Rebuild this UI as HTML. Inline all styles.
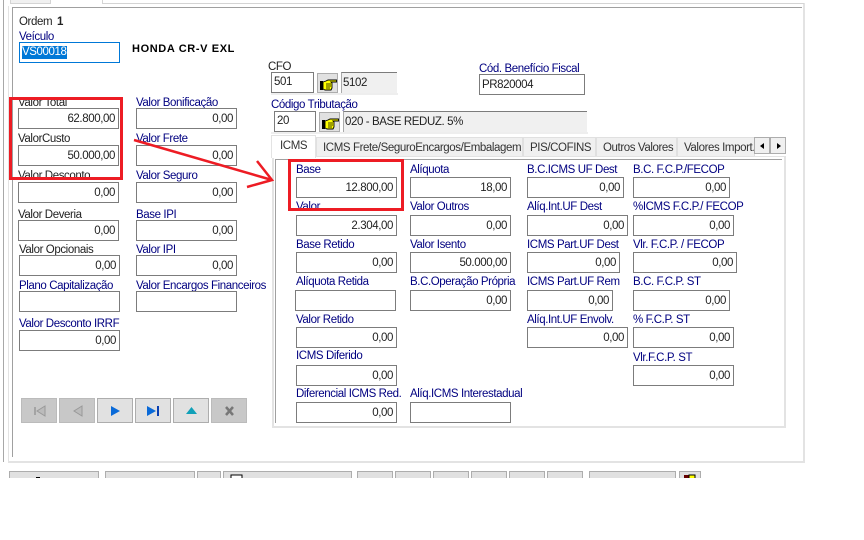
<!DOCTYPE html>
<html><head><meta charset="utf-8"><style>
html,body{margin:0;padding:0;background:#fff}
#p{position:relative;width:864px;height:540px;overflow:hidden;background:#fff;font:11.5px/13px "Liberation Sans",sans-serif;letter-spacing:-.4px;color:#000080}
#p div,#p span.a{position:absolute;box-sizing:border-box}
.l{white-space:nowrap;height:13px;margin-top:1px}
.k{color:#222}
.b{height:21px;border:1px solid #7c7c7c;background:#fff;color:#222;text-align:right;padding-right:3px;line-height:21px;white-space:nowrap}
.g{height:21px;background:#f0f0f0;border-top:1px solid #7c7c7c;border-left:1px solid #aaa;color:#222;line-height:21px;padding-left:1px;white-space:nowrap}
.h{width:21px;height:20px;background:#e1e1e1;border:1px solid #adadad}
.t{height:19px;top:137px;background:#f0f0f0;border:1px solid #e0e0e0;border-bottom:0;color:#333;line-height:20px;padding-left:6px;white-space:nowrap;overflow:hidden}
.n{top:398px;width:36px;height:25px;border:1px solid #adadad;background:#e1e1e1}
.d{background:#c8c8c8;border-color:#bbb}
.f{top:471px;height:8px;border:1px solid #adadad;background:#e1e1e1}
svg{position:absolute;left:0;top:0;overflow:visible}
</style></head><body><div id="p">

<!-- outer frame -->
<div style="left:3px;top:0;width:1px;height:462px;background:#a8a8a8"></div>
<div style="left:8px;top:6px;width:1px;height:456px;background:#e3e3e3"></div>
<div style="left:8px;top:461px;width:796px;height:2px;background:#e3e3e3"></div>
<div style="left:803px;top:3px;width:2px;height:460px;background:#e3e3e3"></div>
<div style="left:12px;top:7px;width:1px;height:450px;background:#a0a0a0"></div>
<div style="left:12px;top:7px;width:790px;height:1px;background:#a0a0a0"></div>
<div style="left:10px;top:0;width:41px;height:4px;background:#f0f0f0;border:1px solid #d4d4d4;border-top:0"></div>
<div style="left:102px;top:0;width:702px;height:4px;border-left:1px solid #d4d4d4;border-bottom:1px solid #d4d4d4"></div>

<div class="l k" style="left:19px;top:15px">Ordem</div>
<div class="l k" style="left:57px;top:15px;font-weight:bold">1</div>
<div class="l" style="left:19px;top:30px">Veículo</div>
<div class="b" style="left:19px;top:42px;width:101px;border-color:#0078d7;text-align:left;padding-left:2px;line-height:19px"><span style="background:#0078d7;color:#fff;display:inline-block;line-height:13px">VS00018</span></div>
<div class="l" style="left:132px;top:42px;color:#000;font-weight:bold;font-size:11px;letter-spacing:.62px">HONDA CR-V EXL</div>

<!-- left columns -->
<div class="l k" style="left:18px;top:96px">Valor Total</div><div class="b" style="left:18px;top:108px;width:101px">62.800,00</div>
<div class="l k" style="left:18px;top:132px">ValorCusto</div><div class="b" style="left:18px;top:145px;width:101px">50.000,00</div>
<div class="l k" style="left:18px;top:169px">Valor Desconto</div><div class="b" style="left:18px;top:182px;width:101px">0,00</div>
<div class="l k" style="left:18px;top:208px">Valor Deveria</div><div class="b" style="left:18px;top:220px;width:101px">0,00</div>
<div class="l k" style="left:19px;top:243px">Valor Opcionais</div><div class="b" style="left:19px;top:255px;width:101px">0,00</div>
<div class="l" style="left:19px;top:279px">Plano Capitalização</div><div class="b" style="left:19px;top:291px;width:101px"></div>
<div class="l" style="left:19px;top:317px">Valor Desconto IRRF</div><div class="b" style="left:19px;top:330px;width:101px">0,00</div>

<div class="l" style="left:136px;top:96px">Valor Bonificação</div><div class="b" style="left:136px;top:108px;width:101px">0,00</div>
<div class="l" style="left:136px;top:132px">Valor Frete</div><div class="b" style="left:136px;top:145px;width:101px">0,00</div>
<div class="l" style="left:136px;top:169px">Valor Seguro</div><div class="b" style="left:136px;top:182px;width:101px">0,00</div>
<div class="l" style="left:136px;top:208px">Base IPI</div><div class="b" style="left:136px;top:220px;width:101px">0,00</div>
<div class="l" style="left:136px;top:243px">Valor IPI</div><div class="b" style="left:136px;top:255px;width:101px">0,00</div>
<div class="l" style="left:136px;top:279px">Valor Encargos Financeiros</div><div class="b" style="left:136px;top:291px;width:101px"></div>

<!-- CFO -->
<div class="l k" style="left:268px;top:60px">CFO</div>
<div class="b" style="left:271px;top:72px;width:43px;text-align:left;padding-left:2px;line-height:18px">501</div>
<div class="h" style="left:317px;top:73px"><svg width="21" height="20"><path d="M2 7h3v9H2z" fill="#000"/><path d="M5 8l3-1 2-1h8.500v2H13l1 1v5l-1 2H7l-2-1z" fill="#ff0" stroke="#000" stroke-width=".9"/><path d="M8 10h5M8 12h5M8 14h4" stroke="#000" stroke-width=".8"/></svg></div>
<div class="g" style="left:341px;top:72px;width:56px">5102</div>
<div style="left:271px;top:93px;width:127px;height:2px;background:#eee"></div>

<div class="l" style="left:271px;top:98px">Código Tributação</div>
<div class="b" style="left:274px;top:111px;width:42px;text-align:left;padding-left:2px;line-height:18px">20</div>
<div class="h" style="left:319px;top:112px"><svg width="21" height="20"><path d="M2 7h3v9H2z" fill="#000"/><path d="M5 8l3-1 2-1h8.500v2H13l1 1v5l-1 2H7l-2-1z" fill="#ff0" stroke="#000" stroke-width=".9"/><path d="M8 10h5M8 12h5M8 14h4" stroke="#000" stroke-width=".8"/></svg></div>
<div class="g" style="left:343px;top:111px;width:244px">020 - BASE REDUZ. 5%</div>
<div style="left:271px;top:132px;width:317px;height:2px;background:#eee"></div>

<div class="l" style="left:479px;top:62px">Cód. Benefício Fiscal</div>
<div class="b" style="left:479px;top:74px;width:106px;text-align:left;padding-left:2px">PR820004</div>

<!-- tabs -->
<div style="left:272px;top:156px;width:514px;height:272px;border:2px solid #e3e3e3;border-top:1px solid #e3e3e3;background:#fff"></div>
<div style="left:275px;top:159px;width:507px;height:1px;background:#a0a0a0"></div>
<div style="left:275px;top:159px;width:1px;height:264px;background:#a0a0a0"></div>
<div class="t" style="left:316px;width:207px">ICMS Frete/SeguroEncargos/Embalagem</div>
<div class="t" style="left:523px;width:73px">PIS/COFINS</div>
<div class="t" style="left:596px;width:81px">Outros Valores</div>
<div class="t" style="left:677px;width:78px">Valores Import.</div>
<div class="t" style="left:271px;top:135px;height:23px;width:45px;background:#fff;border-color:#e3e3e3;line-height:20px;padding-left:8px;z-index:2">ICMS</div>
<div style="left:754px;top:137px;width:16px;height:17px;background:#f0f0f0;border:1px solid #adadad"><svg width="16" height="17"><path d="M9 5v6L5 8z" fill="#000"/></svg></div>
<div style="left:770px;top:137px;width:16px;height:17px;background:#f0f0f0;border:1px solid #adadad"><svg width="16" height="17"><path d="M6 5v6l4-3z" fill="#000"/></svg></div>

<!-- ICMS col 1 -->
<div class="l" style="left:296px;top:163px">Base</div><div class="b" style="left:296px;top:177px;width:101px">12.800,00</div>
<div class="l" style="left:296px;top:200px">Valor</div><div class="b" style="left:296px;top:215px;width:101px">2.304,00</div>
<div class="l" style="left:296px;top:238px">Base Retido</div><div class="b" style="left:296px;top:252px;width:101px">0,00</div>
<div class="l" style="left:296px;top:275px">Alíquota Retida</div><div class="b" style="left:295px;top:290px;width:101px"></div>
<div class="l" style="left:296px;top:313px">Valor Retido</div><div class="b" style="left:296px;top:327px;width:101px">0,00</div>
<div class="l" style="left:296px;top:349px">ICMS Diferido</div><div class="b" style="left:296px;top:365px;width:101px">0,00</div>
<div class="l" style="left:296px;top:387px">Diferencial ICMS Red.</div><div class="b" style="left:296px;top:402px;width:101px">0,00</div>
<!-- col 2 -->
<div class="l" style="left:410px;top:163px">Alíquota</div><div class="b" style="left:410px;top:177px;width:101px">18,00</div>
<div class="l" style="left:410px;top:200px">Valor Outros</div><div class="b" style="left:410px;top:215px;width:101px">0,00</div>
<div class="l" style="left:410px;top:238px">Valor Isento</div><div class="b" style="left:410px;top:252px;width:101px">50.000,00</div>
<div class="l" style="left:410px;top:275px">B.C.Operação Própria</div><div class="b" style="left:410px;top:290px;width:101px">0,00</div>
<div class="l" style="left:410px;top:387px">Alíq.ICMS Interestadual</div><div class="b" style="left:410px;top:402px;width:101px"></div>
<!-- col 3 -->
<div class="l" style="left:527px;top:163px">B.C.ICMS UF Dest</div><div class="b" style="left:527px;top:177px;width:97px">0,00</div>
<div class="l" style="left:527px;top:200px">Alíq.Int.UF Dest</div><div class="b" style="left:527px;top:215px;width:101px">0,00</div>
<div class="l" style="left:527px;top:238px">ICMS Part.UF Dest</div><div class="b" style="left:527px;top:252px;width:93px">0,00</div>
<div class="l" style="left:527px;top:275px">ICMS Part.UF Rem</div><div class="b" style="left:527px;top:290px;width:86px">0,00</div>
<div class="l" style="left:527px;top:313px">Alíq.Int.UF Envolv.</div><div class="b" style="left:527px;top:327px;width:101px">0,00</div>
<!-- col 4 -->
<div class="l" style="left:633px;top:163px">B.C. F.C.P./FECOP</div><div class="b" style="left:633px;top:177px;width:97px">0,00</div>
<div class="l" style="left:633px;top:200px">%ICMS F.C.P./ FECOP</div><div class="b" style="left:633px;top:215px;width:101px">0,00</div>
<div class="l" style="left:633px;top:238px">Vlr. F.C.P. / FECOP</div><div class="b" style="left:633px;top:252px;width:104px">0,00</div>
<div class="l" style="left:633px;top:275px">B.C. F.C.P. ST</div><div class="b" style="left:633px;top:290px;width:97px">0,00</div>
<div class="l" style="left:633px;top:313px">% F.C.P. ST</div><div class="b" style="left:633px;top:327px;width:101px">0,00</div>
<div class="l" style="left:633px;top:351px">Vlr.F.C.P. ST</div><div class="b" style="left:633px;top:365px;width:101px">0,00</div>

<!-- nav -->
<div class="n d" style="left:21px"><svg width="36" height="25"><path d="M13 8v8" stroke="#999" stroke-width="1.5"/><path d="M23 7v10l-8-5z" fill="#bbb" stroke="#999"/></svg></div>
<div class="n d" style="left:59px"><svg width="36" height="25"><path d="M22 7v10l-8-5z" fill="#bbb" stroke="#999"/></svg></div>
<div class="n" style="left:97px"><svg width="36" height="25"><path d="M13 7v10l9-5z" fill="#0a6ad8"/></svg></div>
<div class="n" style="left:135px"><svg width="36" height="25"><path d="M11 7v10l9-5z" fill="#0a6ad8"/><path d="M22 7v10" stroke="#0a3fb0" stroke-width="2"/></svg></div>
<div class="n" style="left:173px"><svg width="36" height="25"><path d="M12 15h11l-5.500-7z" fill="#10a0b8"/></svg></div>
<div class="n d" style="left:211px"><svg width="36" height="25"><path d="M14 8l7 8M21 8l-7 8" stroke="#777" stroke-width="2.500"/></svg></div>

<!-- bottom bar -->
<div class="f" style="left:9px;width:90px"><svg width="90" height="8"><path d="M26 5h4v3h-4z" fill="#000"/></svg></div>
<div class="f d" style="left:105px;width:90px"></div>
<div class="f" style="left:197px;width:24px"></div>
<div class="f" style="left:223px;width:129px"><svg width="129" height="8"><path d="M7 3h11v5H7z" fill="#fff" stroke="#000"/></svg></div>
<div class="f" style="left:357px;width:36px"></div>
<div class="f" style="left:395px;width:36px"></div>
<div class="f" style="left:433px;width:36px"></div>
<div class="f" style="left:471px;width:36px"></div>
<div class="f" style="left:509px;width:36px"></div>
<div class="f d" style="left:547px;width:36px"></div>
<div class="f d" style="left:589px;width:87px"></div>
<div class="f" style="left:679px;width:22px"><svg width="22" height="8"><path d="M4 3h5v5H4z" fill="#600"/><path d="M9 3h6v5H9z" fill="#ff0" stroke="#000"/></svg></div>
<div style="left:0;top:478px;width:864px;height:62px;background:#fff"></div>

<!-- annotations -->
<div style="left:9px;top:97px;width:114px;height:83px;border:3px solid #ed1c24"></div>
<div style="left:288px;top:159px;width:116px;height:52px;border:3px solid #ed1c24"></div>
<svg width="864" height="540" style="pointer-events:none"><path d="M134 140L272 180M257 161L272 180L247 187" fill="none" stroke="#ed1c24" stroke-width="2.500"/></svg>
</div></body></html>
